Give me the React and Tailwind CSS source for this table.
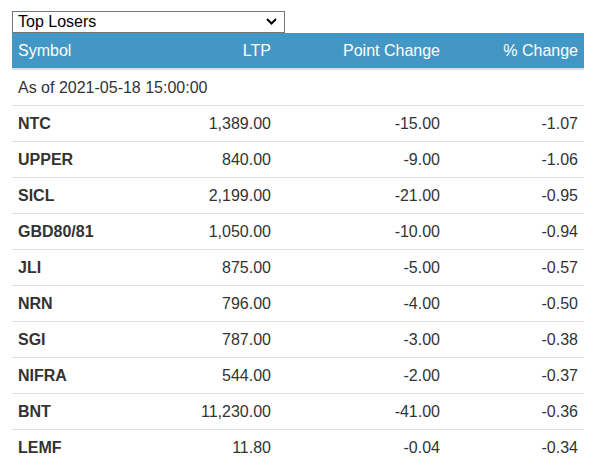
import { useState } from "react";

const rows = [
  ["NTC", "1,389.00", "-15.00", "-1.07"],
  ["UPPER", "840.00", "-9.00", "-1.06"],
  ["SICL", "2,199.00", "-21.00", "-0.95"],
  ["GBD80/81", "1,050.00", "-10.00", "-0.94"],
  ["JLI", "875.00", "-5.00", "-0.57"],
  ["NRN", "796.00", "-4.00", "-0.50"],
  ["SGI", "787.00", "-3.00", "-0.38"],
  ["NIFRA", "544.00", "-2.00", "-0.37"],
  ["BNT", "11,230.00", "-41.00", "-0.36"],
  ["LEMF", "11.80", "-0.04", "-0.34"],
];

const App = () => {
  const [view, setView] = useState("losers");

  return (
    <div className="min-h-screen bg-white pl-3 pt-[10px] font-['Liberation_Sans',Arial,sans-serif] text-[16px] text-[#333]">
      <div className="relative h-[22px] w-[273px]">
        <select
          value={view}
          onChange={(e) => setView(e.target.value)}
          className="h-[22px] w-full appearance-none rounded-none border border-[#767676] bg-white pl-[5px] text-[16px] leading-[20px] text-black outline-none"
        >
          <option value="losers">Top Losers</option>
          <option value="gainers">Top Gainers</option>
          <option value="turnover">Top Turnover</option>
        </select>
        <svg
          className="pointer-events-none absolute right-[8px] top-[8px]"
          width="11"
          height="7"
          viewBox="0 0 11 7"
        >
          <path d="M1 1l4.5 4.5L10 1" fill="none" stroke="#000" strokeWidth="2" />
        </svg>
      </div>
      <table className="mt-px w-[572px] table-fixed border-collapse">
        <colgroup>
          <col className="w-[130px]" />
          <col className="w-[135px]" />
          <col className="w-[169px]" />
          <col className="w-[138px]" />
        </colgroup>
        <thead>
          <tr className="h-[36px] border-b-2 border-[#ddd] bg-[#4397c4] text-white">
            <th className="px-[6px] text-left font-normal">Symbol</th>
            <th className="px-[6px] text-right font-normal">LTP</th>
            <th className="px-[6px] text-right font-normal">Point Change</th>
            <th className="px-[6px] text-right font-normal">% Change</th>
          </tr>
        </thead>
        <tbody>
          <tr className="h-[36px]">
            <td colSpan={4} className="px-[6px] pt-[2px]">
              As of 2021-05-18 15:00:00
            </td>
          </tr>
          {rows.map(([sym, ltp, pt, pct]) => (
            <tr key={sym} className="h-[36px] border-t border-[#ddd]">
              <td className="px-[6px] pt-[2px] font-bold">{sym}</td>
              <td className="px-[6px] pt-[2px] text-right">{ltp}</td>
              <td className="px-[6px] pt-[2px] text-right">{pt}</td>
              <td className="px-[6px] pt-[2px] text-right">{pct}</td>
            </tr>
          ))}
        </tbody>
      </table>
    </div>
  );
};

export default App;
